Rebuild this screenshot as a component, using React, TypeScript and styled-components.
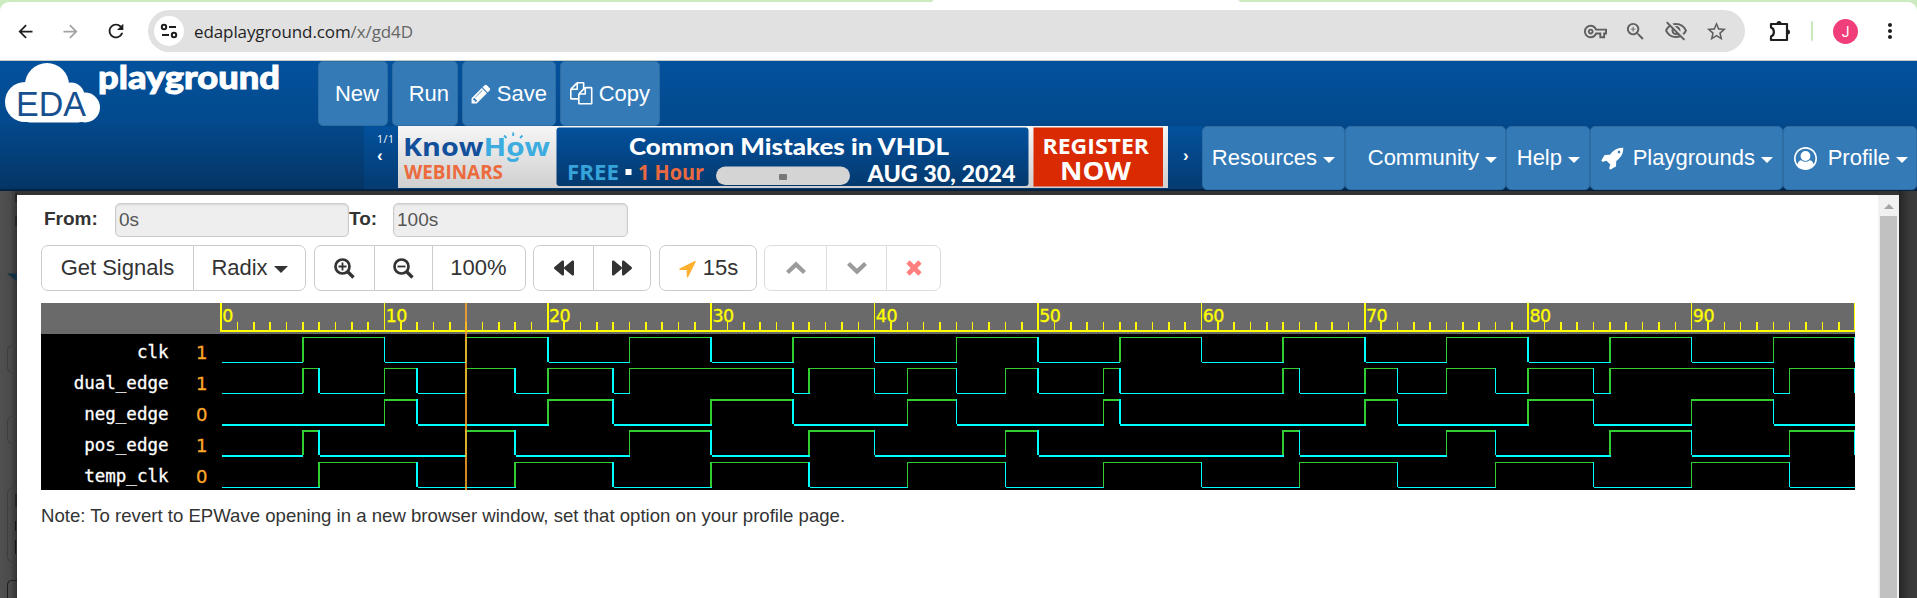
import React from "react";
import styled, { createGlobalStyle } from "styled-components";
import {
  MdArrowBack,
  MdArrowForward,
  MdRefresh,
  MdOutlineVpnKey,
  MdZoomIn,
  MdOutlineVisibilityOff,
  MdStarBorder,
  MdMoreVert,
} from "react-icons/md";
import { FaBackward, FaForward } from "react-icons/fa";

const GlobalStyle = createGlobalStyle`
  * { box-sizing: border-box; }
  body {
    margin: 0;
    overflow: hidden;
    background: #fff;
    color: #333;
    font-family: "Liberation Sans", Arial, sans-serif;
  }
  svg { display: block; flex: none; }
`;

const Window = styled.div`
  width: 1917px;
  height: 598px;
  display: flex;
  flex-direction: column;
  overflow: hidden;
`;

/* ---------- browser chrome ---------- */

const TabStrip = styled.div`
  height: 12px;
  margin-bottom: -10px;
  flex: none;
  display: flex;
  justify-content: space-between;
  background: #cdebc1;
`;

const ActiveTab = styled.div`
  width: 308px;
  height: 3px;
  margin-left: 932px;
  border-radius: 8px 8px 0 0;
  background: #fff;
`;

const AddressRow = styled.div`
  position: relative;
  height: 59px;
  flex: none;
  display: flex;
  align-items: center;
  padding: 0 15px 0 15px;
  background: #fff;
  border-radius: 9px 9px 0 0;
  border-bottom: 1px solid #c5c9c5;
`;

const NavIcons = styled.div`
  width: 133px;
  display: flex;
  align-items: center;
  gap: 24px;
  color: #1f1f1f;
  svg:nth-child(2) { color: #a2a2a2; }
`;

const Omnibox = styled.div`
  width: 1597px;
  height: 42px;
  display: flex;
  align-items: center;
  padding: 0 17px 0 6px;
  border-radius: 21px;
  background: #e1e1e1;
  color: #5f5f5f;
`;

const SiteInfo = styled.div`
  width: 30px;
  height: 30px;
  border-radius: 50%;
  background: #fff;
  display: flex;
  align-items: center;
  justify-content: center;
`;

const Url = styled.div`
  flex: 1;
  margin-left: 10px;
  padding-top: 1px;
  font: 17px/24px "Open Sans", sans-serif;
  letter-spacing: -0.1px;
  color: #666;
  b { font-weight: 400; color: #1f1f1f; }
`;

const OmniIcons = styled.div`
  display: flex;
  align-items: center;
  gap: 17px;
`;

const ChromeRight = styled.div`
  flex: 1;
  display: flex;
  align-items: center;
  justify-content: space-between;
  padding-left: 24px;
  color: #1f1f1f;
`;

const Divider = styled.div`
  width: 2px;
  height: 20px;
  border-radius: 1px;
  background: #c9e9bd;
`;

const Avatar = styled.div`
  width: 25px;
  height: 25px;
  border-radius: 50%;
  background: #f03e7b;
  color: #fff;
  font: 14px/26px Roboto, sans-serif;
  text-align: center;
`;

/* ---------- site header ---------- */

const Header = styled.header`
  height: 130px;
  flex: none;
  background: linear-gradient(#03519d, #034a8e 45%, #043565 98%, #04223f 99%);
`;

const HeaderTop = styled.div`
  height: 65px;
  display: flex;
`;

const HeaderBottom = styled.div`
  height: 64px;
  display: flex;
  padding-left: 364px;
`;

const LogoBox = styled.div`
  width: 318px;
  svg { overflow: visible; }
`;

const MainActions = styled.div`
  display: flex;
  gap: 4px;
`;

const NavButton = styled.div<{ $w: number; $end?: number }>`
  width: ${(p) => p.$w}px;
  height: 100%;
  display: flex;
  align-items: center;
  justify-content: flex-end;
  padding-right: ${(p) => p.$end ?? 9}px;
  border: 1px solid #2e6da4;
  border-radius: 5px;
  background: #337ab7;
  color: #fff;
  font-size: 22px;
  white-space: nowrap;
`;

const Caret = styled.span<{ $size?: number }>`
  width: 0;
  height: 0;
  margin-left: 6px;
  margin-top: 3px;
  border: ${(p) => p.$size ?? 6}px solid transparent;
  border-top-color: currentColor;
  border-bottom-width: 0;
`;

const IconSlot = styled.span<{ $gap: number; $color?: string }>`
  margin-right: ${(p) => p.$gap}px;
  color: ${(p) => p.$color ?? "inherit"};
`;

const Carousel = styled.div`
  width: 838px;
  height: 63px;
  display: flex;
  background: linear-gradient(#03519d, #043b72);
  color: #fff;
`;

const CarouselPrev = styled.div`
  width: 34px;
  padding: 5px 0 0 13px;
  font: 10.5px/16px "Open Sans", sans-serif;
  letter-spacing: 0.6px;
  white-space: nowrap;
`;

const CarouselArrow = styled.div`
  font: bold 17px/18px "Liberation Sans", sans-serif;
`;

const CarouselNext = styled.div`
  padding: 21px 0 0 15px;
`;

/* ---------- modal ---------- */

const Stage = styled.main`
  flex: 1;
  display: flex;
  padding-top: 4px;
  background: #333;
`;

const Backdrop = styled.div`
  width: 17px;
  margin-top: -4px;
  background: linear-gradient(90deg, #505050, #4a4a4a 60%, #333);
  overflow: hidden;
`;

const BackdropRight = styled.div`
  flex: 1;
  margin-top: -4px;
  background: linear-gradient(90deg, #252525, #383838 50%, #3c3c3c);
`;

const Modal = styled.section`
  width: 1861px;
  background: #fff;
  padding: 8px 0 0 24px;
`;

const ScrollTrack = styled.div`
  width: 21px;
  display: flex;
  flex-direction: column;
  align-items: center;
  gap: 7px;
  padding-top: 9px;
  background: #f1f1f1;
`;

const ScrollUp = styled.div`
  border: 5px solid transparent;
  border-bottom-color: #a3a3a3;
  border-top-width: 0;
`;

const ScrollThumb = styled.div`
  width: 17px;
  flex: 1;
  background: #c1c1c1;
`;

const RangeForm = styled.div`
  display: flex;
  height: 34px;
  padding-left: 2px;
`;

const FieldLabel = styled.label<{ $w: number; $indent?: number }>`
  width: ${(p) => p.$w}px;
  padding-left: ${(p) => p.$indent ?? 0}px;
  font-size: 19px;
  font-weight: 700;
  line-height: 32px;
`;

const Field = styled.div<{ $w: number }>`
  width: ${(p) => p.$w}px;
  padding-left: 3px;
  border: 1px solid #ccc;
  border-radius: 5px;
  background: #eee;
  box-shadow: inset 0 1px 2px rgba(0, 0, 0, 0.1);
  color: #555;
  font-size: 19px;
  line-height: 32px;
`;

const Toolbar = styled.div`
  display: flex;
  gap: 7.5px;
  margin-top: 8px;
  height: 46px;
`;

const Group = styled.div<{ $disabled?: boolean }>`
  display: flex;
  border: 1px solid #ccc;
  border-radius: 7px;
  opacity: ${(p) => (p.$disabled ? 0.65 : 1)};
`;

const ToolButton = styled.div<{ $w: number }>`
  width: ${(p) => p.$w}px;
  display: flex;
  align-items: center;
  justify-content: center;
  font-size: 22px;
  & + & { border-left: 1px solid #ccc; }
`;

const WavePanel = styled.div`
  width: 1814px;
  height: 187px;
  margin-top: 12px;
  display: flex;
  background: linear-gradient(#6a6a6a 31px, #000 31px);
`;

const SignalColumn = styled.div<{ $w: number; $value?: boolean }>`
  width: ${(p) => p.$w}px;
  padding-top: 33.5px;
  text-align: right;
  white-space: nowrap;
  font: ${(p) => (p.$value ? '18px/31.2px "DejaVu Sans", sans-serif' : '17.5px/31.2px "DejaVu Sans Mono", monospace')};
  color: ${(p) => (p.$value ? "#ffa829" : "#fff")};
  -webkit-text-stroke: 0.3px currentColor;
`;

const SignalCell = styled.div`
  height: 31.2px;
`;

const Note = styled.p`
  margin: 15px 0 0;
  font-size: 18.6px;
  line-height: 22px;
`;

/* ---------- drawings ---------- */

const TuneIcon = () => (
  <svg width="18" height="18" viewBox="0 0 18 18" fill="none" stroke="#1f1f1f" strokeWidth="2">
    <circle cx="4" cy="5" r="2.2" />
    <path d="M9 5h7M2 13h7" />
    <circle cx="14" cy="13" r="2.2" />
  </svg>
);

const ExtensionIcon = () => (
  <svg width="22" height="22" viewBox="0 0 22 22" fill="none" stroke="#1f1f1f" strokeWidth="2.2" strokeLinejoin="round">
    <path d="M2 4H18V20H2V16.5C5.8 15.5 5.8 8.5 2 7.5Z" />
    <path d="M7.5 3.5A2.5 2.5 0 0 1 12.5 3.5ZM18.5 9.5A2.5 2.5 0 0 1 18.5 14.5Z" fill="#1f1f1f" stroke="none" />
  </svg>
);

const Logo = () => (
  <svg width="290" height="65" viewBox="0 0 290 65">
    <g fill="#fff">
      <circle cx="47" cy="24" r="22" />
      <circle cx="25" cy="41" r="20" />
      <circle cx="71" cy="35" r="13.5" />
      <circle cx="85" cy="46.5" r="15" />
      <rect x="22" y="36" width="64" height="25.5" rx="8" />
    </g>
    <text x="16" y="55" fontFamily="Liberation Sans" fontSize="35" fill="#17508f" textLength="70" lengthAdjust="spacingAndGlyphs">
      EDA
    </text>
    <text x="98" y="27.5" fontFamily="Lato" fontWeight="900" fontSize="32" fill="#fff" stroke="#fff" strokeWidth="0.9" textLength="182" lengthAdjust="spacingAndGlyphs">
      playground
    </text>
  </svg>
);

const Glyph = ({ d, size }: { d: string; size: number }) => (
  <svg width={size} height={size} viewBox="0 0 1792 1792" fill="currentColor">
    <path d={d} />
  </svg>
);

const glyphs = {
  pencil:
    "M491 1536l91-91-235-235-91 91v107h128v128h107zm523-928q0-22-22-22-10 0-17 7l-542 542q-7 7-7 17 0 22 22 22 10 0 17-7l542-542q7-7 7-17zm-54-192l416 416-832 832h-416v-416l832-832zm683 96q0 53-37 90l-166 166-416-416 166-165q36-38 90-38 53 0 91 38l235 234q37 39 37 91z",
  files:
    "M1696 384q40 0 68 28t28 68v1216q0 40-28 68t-68 28h-960q-40 0-68-28t-28-68v-288h-544q-40 0-68-28t-28-68v-672q0-40 20-88t48-76l408-408q28-28 76-48t88-20h416q40 0 68 28t28 68v328q68-40 128-40h416zm-544 213l-299 299h299v-299zm-640-384l-299 299h299v-299zm196 647l316-316v-416h-384v416q0 40-28 68t-68 28h-416v640h512v-256q0-40 20-88t48-76zm956 804v-1152h-384v416q0 40-28 68t-68 28h-416v640h896z",
  rocket:
    "M1440 448q0-40-28-68t-68-28-68 28-28 68 28 68 68 28 68-28 28-68zm224-288q0 249-75.5 430.5t-253.5 360.5q-81 80-195 176l-20 379q-2 16-16 26l-384 224q-7 4-16 4-12 0-23-9l-64-64q-13-14-8-32l85-276-281-281-276 85q-3 1-9 1-14 0-23-9l-64-64q-17-19-5-39l224-384q10-14 26-16l379-20q96-114 176-195 188-187 358-258t431-71q14 0 24 9.5t10 22.5z",
  user:
    "M896 0q182 0 348 71t286 191 191 286 71 348q0 181-70.5 347t-190.5 286-286 191.5-349 71.5-349-71-285.5-191.5-190.5-286-71-347.5 71-348 191-286 286-191 348-71zm619 1351q149-205 149-455 0-156-61-298t-164-245-245-164-298-61-298 61-245 164-164 245-61 298q0 250 149 455 66-327 306-327 131 128 313 128t313-128q240 0 306 327zm-235-647q0-159-112.5-271.5t-271.5-112.5-271.5 112.5-112.5 271.5 112.5 271.5 271.5 112.5 271.5-112.5 112.5-271.5z",
  arrow:
    "M1593 349l-640 1280q-17 35-57 35-5 0-15-2-22-5-35.5-22.5t-13.5-39.5v-576h-576q-22 0-39.5-13.5t-22.5-35.5 4-42 29-30l1280-640q13-7 29-7 27 0 45 19 15 14 18.5 34.5t-6.5 39.5z",
};

const Magnifier = ({ plus }: { plus?: boolean }) => (
  <svg width="21" height="21" viewBox="0 0 21 21" fill="none" stroke="#333">
    <circle cx="8.5" cy="8.5" r="7" strokeWidth="2.7" />
    <path d="M13.5 13.5L19.5 19.5" strokeWidth="3.4" />
    <path d={plus ? "M4.5 8.5H12.5M8.5 4.5V12.5" : "M4.5 8.5H12.5"} strokeWidth="1.8" />
  </svg>
);

const Chevron = ({ down }: { down?: boolean }) => (
  <svg width="20" height="14" viewBox="0 0 20 14" fill="none" stroke="#666" strokeWidth="4.2">
    <path d={down ? "M1.5 2.5L10 10.5L18.5 2.5" : "M1.5 11.5L10 3.5L18.5 11.5"} />
  </svg>
);

const Cross = () => (
  <svg width="16" height="16" viewBox="0 0 16 16" stroke="#ff3b3b" strokeWidth="4.6">
    <path d="M2 2L14 14M14 2L2 14" />
  </svg>
);

type BannerTextProps = { x: number; y: number; w: number; size: number; fill?: string; family?: string; children: string };

const BannerText = ({ x, y, w, size, fill = "#fff", family = "Open Sans", children }: BannerTextProps) => (
  <text x={x} y={y} fontFamily={family} fontWeight={family === "Lato" ? 900 : 700} fontSize={size} fill={fill} textLength={w} lengthAdjust="spacingAndGlyphs">
    {children}
  </text>
);

const Banner = () => (
  <svg width="770" height="62" viewBox="398 126 770 62">
    <defs>
      <linearGradient id="paper" x1="0" y1="0" x2="0" y2="1">
        <stop offset="0" stopColor="#f6f6f6" />
        <stop offset="1" stopColor="#cfcfcf" />
      </linearGradient>
      <linearGradient id="navy" x1="0" y1="0" x2="0" y2="1">
        <stop offset="0" stopColor="#03519d" />
        <stop offset="1" stopColor="#04396e" />
      </linearGradient>
    </defs>
    <rect x="398" y="126" width="770" height="62" fill="url(#paper)" />
    <rect x="556.5" y="127.5" width="472" height="58.5" rx="3" fill="url(#navy)" />
    <rect x="1033.5" y="127.5" width="129.5" height="59" fill="#d92a02" />
    <BannerText x={403} y={156} w={80.5} size={25} fill="#12509c">Know</BannerText>
    <BannerText x={483.5} y={156} w={66.5} size={25} fill="#3dade0">How</BannerText>
    <path d="M508.5 157.5Q508.5 160.5 513 160.5Q517.5 160.5 517.5 157.5" stroke="#3dade0" strokeWidth="3" fill="none" />
    <path d="M513.2 132.5V136M504 135.5L506.5 138M522.5 135.5L520 138" stroke="#3dade0" strokeWidth="1.8" />
    <BannerText x={404} y={179} w={99} size={19.5} fill="#ec6a3c">WEBINARS</BannerText>
    <BannerText x={629} y={154.5} w={320} size={23} family="Lato">Common Mistakes in VHDL</BannerText>
    <BannerText x={567} y={180} w={52} size={22} fill="#36a3da">FREE</BannerText>
    <rect x="625.5" y="169" width="6" height="6" fill="#fff" />
    <BannerText x={638} y={180} w={66} size={22} fill="#ea6a40">1 Hour</BannerText>
    <rect x="716" y="166.5" width="134" height="18.5" rx="9.2" fill="#d4d4d4" />
    <rect x="779" y="174" width="8" height="6" rx="1" fill="#777" />
    <BannerText x={867.5} y={181.5} w={148} size={23} family="Lato">AUG 30, 2024</BannerText>
    <BannerText x={1042.5} y={154} w={106.5} size={21.5}>REGISTER</BannerText>
    <BannerText x={1060} y={180} w={71} size={25}>NOW</BannerText>
  </svg>
);

/* ---------- waveform data and plot ---------- */

const every = (n: number) => Array.from({ length: Math.floor(100 / n) }, (_, i) => (i + 1) * n);

type Signal = { name: string; value: number; top: number; thick: number; edges: number[] };

/* edges lists the times at which the signal toggles, starting from low */
const signals: Signal[] = [
  { name: "clk", value: 1, top: 34, thick: 1, edges: every(5) },
  { name: "dual_edge", value: 1, top: 65, thick: 1, edges: [5, 6, 10, 12, 15, 18, 20, 24, 25, 35, 36, 40, 42, 45, 48, 50, 54, 55, 65, 66, 70, 72, 75, 78, 80, 84, 85, 95, 96, 100] },
  { name: "neg_edge", value: 0, top: 96, thick: 2, edges: [10, 12, 20, 24, 30, 35, 42, 45, 54, 55, 70, 72, 80, 84, 90, 95] },
  { name: "pos_edge", value: 1, top: 127, thick: 2, edges: [5, 6, 15, 18, 25, 30, 36, 40, 48, 50, 65, 66, 75, 78, 85, 90, 96, 100] },
  { name: "temp_clk", value: 0, top: 159, thick: 1, edges: every(6) },
];

const timeX = (t: number) => 0.25 + t * 16.34;

const Trace = ({ s }: { s: Signal }) => {
  const stops = [0, ...s.edges, 100].filter((t, i, all) => i === 0 || t !== all[i - 1]);
  return (
    <>
      {stops.slice(0, -1).map((t, i) => (
        <rect key={"h" + t} x={timeX(t) + 1.5} y={i % 2 ? s.top : s.top + 25} width={timeX(stops[i + 1]) - timeX(t)} height={s.thick} fill={i % 2 ? "#32cd32" : "#00ffff"} />
      ))}
      {s.edges.map((t, i) => (
        <rect key={"v" + t} x={timeX(t)} y={s.top} width="1.6" height="25" fill={i % 2 ? "#00ffff" : "#32cd32"} />
      ))}
    </>
  );
};

const WavePlot = () => (
  <svg width="1635" height="187" viewBox="0 0 1635 187" shapeRendering="crispEdges">
    {Array.from({ length: 101 }, (_, t) => (
      <rect key={t} x={timeX(t)} y={t % 10 ? 19 : 0} width="1.6" height={t % 10 ? 9 : 28} fill="#ffff00" />
    ))}
    <rect x="0" y="27" width="1635" height="2" fill="#ffff00" />
    {Array.from({ length: 10 }, (_, i) => (
      <text key={i} x={timeX(i * 10) + 2} y="19" fontFamily="DejaVu Sans" fontSize="17.5" letterSpacing="-0.6" fill="#ffff00" stroke="#ffff00" strokeWidth="0.3">
        {i * 10}
      </text>
    ))}
    {signals.map((s) => (
      <Trace key={s.name} s={s} />
    ))}
    <rect x="245" y="0" width="2" height="187" fill="#ffa829" fillOpacity="0.82" />
  </svg>
);

const PageBehind = () => (
  <svg width="17" height="408" viewBox="0 191 17 408" fill="none" stroke="#3c3c3c">
    <path d="M7 273.5H17V281.5Z" fill="#12303f" stroke="none" />
    <rect x="7.5" y="345.5" width="40" height="27" rx="5" />
    <rect x="7.5" y="416.5" width="40" height="27" rx="5" />
    <rect x="7.5" y="487.5" width="40" height="75" rx="6" />
    <rect x="7.5" y="580.5" width="40" height="26" rx="4" stroke="#1c1c1c" />
    <path d="M16 193v9M16 216v10M16 494v13M15.5 521v10M15.5 540v14" stroke="#151515" />
  </svg>
);

export default function App() {
  return (
    <Window>
      <GlobalStyle />
      <TabStrip>
        <ActiveTab />
      </TabStrip>
      <AddressRow>
        <NavIcons>
          <MdArrowBack size={21} />
          <MdArrowForward size={21} />
          <MdRefresh size={22} />
        </NavIcons>
        <Omnibox>
          <SiteInfo>
            <TuneIcon />
          </SiteInfo>
          <Url>
            <b>edaplayground.com</b>/x/gd4D
          </Url>
          <OmniIcons>
            <MdOutlineVpnKey size={23} />
            <MdZoomIn size={23} />
            <MdOutlineVisibilityOff size={24} />
            <MdStarBorder size={23} />
          </OmniIcons>
        </Omnibox>
        <ChromeRight>
          <ExtensionIcon />
          <Divider />
          <Avatar>J</Avatar>
          <MdMoreVert size={24} />
        </ChromeRight>
      </AddressRow>
      <Header>
        <HeaderTop>
          <LogoBox>
            <Logo />
          </LogoBox>
          <MainActions>
            <NavButton $w={70} $end={8}>New</NavButton>
            <NavButton $w={66} $end={8}>Run</NavButton>
            <NavButton $w={94} $end={8}>
              <IconSlot $gap={4.5}>
                <Glyph d={glyphs.pencil} size={22} />
              </IconSlot>
              Save
            </NavButton>
            <NavButton $w={100}>
              <IconSlot $gap={6}>
                <Glyph d={glyphs.files} size={22.5} />
              </IconSlot>
              Copy
            </NavButton>
          </MainActions>
        </HeaderTop>
        <HeaderBottom>
          <Carousel>
            <CarouselPrev>
              1/1
              <CarouselArrow>‹</CarouselArrow>
            </CarouselPrev>
            <Banner />
            <CarouselNext>
              <CarouselArrow>›</CarouselArrow>
            </CarouselNext>
          </Carousel>
          <NavButton $w={143}>
            Resources
            <Caret />
          </NavButton>
          <NavButton $w={161} $end={8}>
            Community
            <Caret />
          </NavButton>
          <NavButton $w={84}>
            Help
            <Caret />
          </NavButton>
          <NavButton $w={193}>
            <IconSlot $gap={8}>
              <Glyph d={glyphs.rocket} size={24} />
            </IconSlot>
            Playgrounds
            <Caret />
          </NavButton>
          <NavButton $w={134} $end={8}>
            <IconSlot $gap={11}>
              <Glyph d={glyphs.user} size={23} />
            </IconSlot>
            Profile
            <Caret />
          </NavButton>
        </HeaderBottom>
      </Header>
      <Stage>
        <Backdrop>
          <PageBehind />
        </Backdrop>
        <Modal>
          <RangeForm>
            <FieldLabel $w={72} $indent={1}>From:</FieldLabel>
            <Field $w={234}>0s</Field>
            <FieldLabel $w={44}>To:</FieldLabel>
            <Field $w={235}>100s</Field>
          </RangeForm>
          <Toolbar>
            <Group>
              <ToolButton $w={151}>Get Signals</ToolButton>
              <ToolButton $w={112}>
                Radix
                <Caret $size={7} />
              </ToolButton>
            </Group>
            <Group>
              <ToolButton $w={59}>
                <Magnifier plus />
              </ToolButton>
              <ToolButton $w={58}>
                <Magnifier />
              </ToolButton>
              <ToolButton $w={93}>100%</ToolButton>
            </Group>
            <Group>
              <ToolButton $w={59}>
                <FaBackward size={20} />
              </ToolButton>
              <ToolButton $w={57}>
                <FaForward size={20} />
              </ToolButton>
            </Group>
            <Group>
              <ToolButton $w={96}>
                <IconSlot $gap={5} $color="#ffb02e">
                  <Glyph d={glyphs.arrow} size={21} />
                </IconSlot>
                15s
              </ToolButton>
            </Group>
            <Group $disabled>
              <ToolButton $w={61}>
                <Chevron />
              </ToolButton>
              <ToolButton $w={60}>
                <Chevron down />
              </ToolButton>
              <ToolButton $w={54}>
                <Cross />
              </ToolButton>
            </Group>
          </Toolbar>
          <WavePanel>
            <SignalColumn $w={127.5}>
              {signals.map((s) => (
                <SignalCell key={s.name}>{s.name}</SignalCell>
              ))}
            </SignalColumn>
            <SignalColumn $w={39} $value>
              {signals.map((s) => (
                <SignalCell key={s.name}>{s.value}</SignalCell>
              ))}
            </SignalColumn>
            <SignalColumn $w={12.5} />
            <WavePlot />
          </WavePanel>
          <Note>Note: To revert to EPWave opening in a new browser window, set that option on your profile page.</Note>
        </Modal>
        <ScrollTrack>
          <ScrollUp />
          <ScrollThumb />
        </ScrollTrack>
        <BackdropRight />
      </Stage>
    </Window>
  );
}
